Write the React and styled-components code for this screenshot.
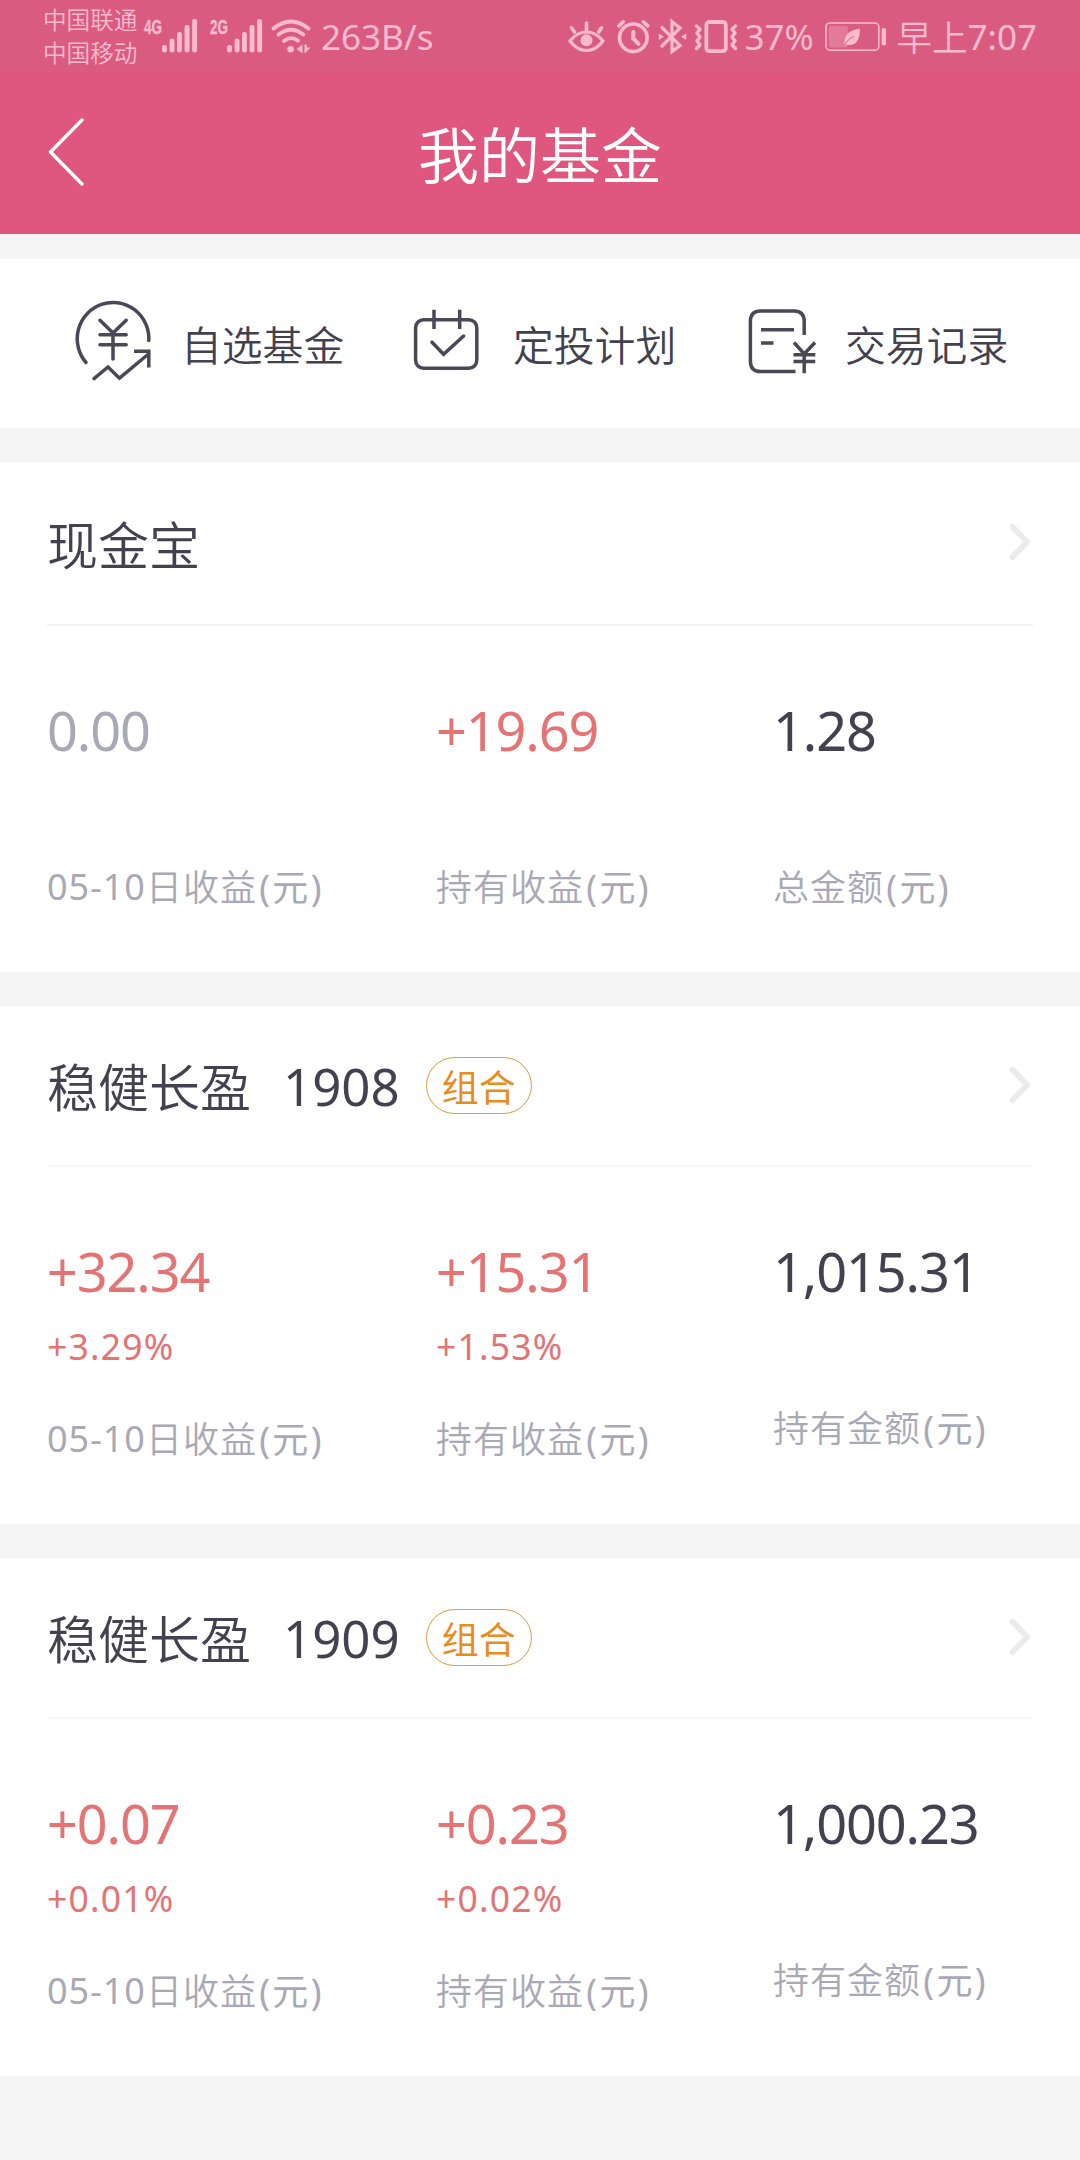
import React from 'react';
import styled, { createGlobalStyle } from 'styled-components';

const GlobalStyle = createGlobalStyle`
  * { box-sizing: border-box; }
  body {
    margin: 0;
    background: #f5f5f5;
    color: #43414f;
    font-family: "Noto Sans", "Noto Sans CJK SC", sans-serif;
  }
  svg { display: block; flex: none; }
`;

const Page = styled.div`
  width: 1080px;
  min-height: 2160px;
  background: #f5f5f5;
`;

/* ---------- status bar ---------- */

const StatusBar = styled.div`
  display: flex;
  justify-content: space-between;
  height: 72px;
  padding: 0 43px;
  background: #d95c80;
  color: #fbbace;
`;

const StatusGroup = styled.div`
  display: flex;
  align-items: flex-start;
`;

const Carriers = styled.div`
  display: flex;
  flex-direction: column;
  width: 101px;
  padding-top: 4px;
  font-size: 23.6px;
  font-weight: 350;
  line-height: 33px;
  white-space: nowrap;
`;

const NetworkTag = styled.div`
  width: 18px;
  margin-top: 16px;
  margin-left: ${(p) => p.$gap || 0}px;
  font: 700 21px/21px "Liberation Sans", sans-serif;
  -webkit-text-stroke: 0.4px #fbbace;
  transform: scaleX(0.64);
  transform-origin: left;
  white-space: nowrap;
`;

const StatusText = styled.div`
  padding-top: 12px;
  font-size: 35px;
  line-height: 50px;
  white-space: nowrap;
  margin-left: ${(p) => p.$gap || 0}px;
`;

const DayPart = styled.span`
  font-weight: 350;
  font-size: 35.5px;
  vertical-align: -1px;
`;

const StatusIcon = styled.svg`
  margin-top: 18px;
  margin-left: ${(p) => p.$gap || 0}px;
`;

/* ---------- title bar ---------- */

const TitleBar = styled.header`
  display: grid;
  grid-template-columns: 120px 1fr 120px;
  align-items: center;
  height: 162px;
  padding: 0 47px;
  background: #df577e;
  color: #fff;
`;

const Title = styled.h1`
  margin: 0;
  padding-top: 5px;
  font-size: 61px;
  line-height: 80px;
  font-weight: 350;
  text-align: center;
`;

/* ---------- shortcuts ---------- */

const Shortcuts = styled.nav`
  display: grid;
  grid-template-columns: repeat(3, 332px);
  height: 169px;
  margin-top: 25px;
  padding-left: 74px;
  background: #fff;
`;

const Shortcut = styled.div`
  display: flex;
  align-items: center;
  white-space: nowrap;
`;

const ShortcutLabel = styled.span`
  padding-top: 3px;
  font-size: 40.8px;
  line-height: 56px;
  font-weight: 350;
`;

const ShortcutIcon = styled.svg`
  width: 107px;
  margin-bottom: 1px;
  fill: none;
  stroke: #4a4856;
  stroke-width: 3.5;
  stroke-linecap: round;
`;

/* ---------- holding cards ---------- */

const Card = styled.section`
  margin-top: 34px;
  padding: 0 47px;
  background: #fff;
`;

const CardHead = styled.div`
  display: flex;
  align-items: center;
  height: ${(p) => (p.$tagged ? 161 : 164)}px;
  border-bottom: 2px solid ${(p) => (p.$tagged ? '#f6f6f6' : '#f2f2f2')};
`;

const FundName = styled.h2`
  margin: 0;
  padding-top: 3px;
  font-size: 51px;
  line-height: 70px;
  font-weight: 350;
  white-space: nowrap;
`;

const FundNumber = styled.span`
  margin-left: 32px;
  font-size: 51px;
  line-height: 70px;
`;

const Tag = styled.span`
  display: flex;
  align-items: center;
  justify-content: center;
  width: 106px;
  height: 57px;
  margin-left: 26px;
  padding-top: 4px;
  border: 1px solid #d99c40;
  border-radius: 29px;
  color: #e88c1e;
  font-size: 37px;
  line-height: 50px;
`;

const Chevron = styled.svg`
  margin: 0 2px 2px auto;
`;

const Stats = styled.div`
  display: grid;
  grid-template-columns: 389px 337px 1fr;
  padding: 69px 0 60px;
`;

const Stat = styled.div`
  display: flex;
  flex-direction: column;
  white-space: nowrap;
`;

const tones = { muted: '#a9a8b5', gain: '#e57373', plain: '#43414f' };

const Value = styled.div`
  font-size: 54px;
  line-height: 70px;
  letter-spacing: -1.1px;
  color: ${(p) => tones[p.$tone]};
`;

const Percent = styled.div`
  margin-top: 15px;
  font-size: 35.5px;
  line-height: 50px;
  letter-spacing: 1.2px;
  color: ${tones.gain};
`;

const Label = styled.div`
  height: 50px;
  margin-top: ${(p) => (p.$below ? 43 : 97)}px;
  font-size: 36px;
  line-height: 50px;
  letter-spacing: 1px;
  color: ${tones.muted};
`;

const LabelName = styled.span`
  font-weight: 350;
  vertical-align: -1px;
`;

const Unit = styled.span`
  margin-left: 2.2px;
  letter-spacing: 2.4px;
  vertical-align: -1px;
`;

const holdings = [
  {
    name: '现金宝',
    stats: [
      { value: '0.00', tone: 'muted', date: '05-10', label: '日收益' },
      { value: '+19.69', tone: 'gain', label: '持有收益' },
      { value: '1.28', tone: 'plain', label: '总金额' },
    ],
  },
  {
    name: '稳健长盈',
    number: '1908',
    tag: '组合',
    stats: [
      { value: '+32.34', percent: '+3.29%', tone: 'gain', date: '05-10', label: '日收益' },
      { value: '+15.31', percent: '+1.53%', tone: 'gain', label: '持有收益' },
      { value: '1,015.31', tone: 'plain', label: '持有金额' },
    ],
  },
  {
    name: '稳健长盈',
    number: '1909',
    tag: '组合',
    stats: [
      { value: '+0.07', percent: '+0.01%', tone: 'gain', date: '05-10', label: '日收益' },
      { value: '+0.23', percent: '+0.02%', tone: 'gain', label: '持有收益' },
      { value: '1,000.23', tone: 'plain', label: '持有金额' },
    ],
  },
];

const SignalBars = ({ gap }) => (
  <StatusIcon $gap={gap} width="36" height="36" fill="#fbbace">
    <rect x="0" y="27" width="4.9" height="7.4" rx="2.2" />
    <rect x="7.6" y="20.5" width="4.9" height="13.9" rx="2.2" />
    <rect x="15" y="14" width="4.9" height="20.4" rx="2.2" />
    <rect x="22.6" y="7" width="4.9" height="27.4" rx="2.2" />
    <rect x="30.2" y="1" width="4.9" height="33.4" rx="2.2" />
  </StatusIcon>
);

const WifiIcon = () => (
  <StatusIcon $gap={8} width="41" height="36" fill="none" stroke="#fbbace" strokeWidth="3.8" strokeLinecap="round">
    <path d="M2.5 10.5 Q20 -3.5 37.5 10.5" />
    <path d="M7.5 16.5 Q20 7 32.3 16.5" />
    <path d="M13 23 Q20 17.5 27 22.6" />
    <circle cx="19.6" cy="31.2" r="3.3" fill="#fbbace" stroke="none" />
    <path d="M31.5 26.5 V35.5 L25.5 31 Z M33.5 26.5 V35.5 L39.5 29.5 H35.8 V26.5 Z" fill="#fbbace" stroke="none" />
  </StatusIcon>
);

const EyeIcon = () => (
  <StatusIcon width="37" height="36" fill="none" stroke="#fbbace" strokeWidth="3.6" strokeLinecap="round">
    <path d="M2 23 Q9 14 18.5 14 Q28 14 35 23 Q28 32.5 18.5 32.5 Q9 32.5 2 23 Z" strokeWidth="3.2" strokeLinejoin="round" />
    <circle cx="18.5" cy="22.3" r="6" fill="#fbbace" stroke="none" />
    <path d="M18.5 5 V12 M3.5 9.8 L6.5 14 M33.5 9.8 L30.7 14" />
  </StatusIcon>
);

const AlarmIcon = () => (
  <StatusIcon $gap={11} width="35" height="37" fill="none" stroke="#fbbace" strokeWidth="3.6" strokeLinecap="round">
    <circle cx="17.3" cy="19.8" r="13.8" strokeWidth="3.6" />
    <path d="M17.3 14 V20.5 L22.5 25.8" strokeWidth="4" />
    <path d="M2.8 7.8 L7.2 3.8 M31.8 7.8 L27.4 3.8" />
  </StatusIcon>
);

const BluetoothIcon = () => (
  <StatusIcon $gap={7} width="29" height="37" fill="none" stroke="#fbbace" strokeWidth="3.2" strokeLinejoin="miter">
    <path d="M3 8.5 L22 27.5 L14 33.5 V3.5 L22 10 L3 29" />
    <path d="M0.8 15.5 L5.8 18.8 L0.8 22 Z M28.2 15.5 L23.2 18.8 L28.2 22 Z" fill="#fbbace" stroke="none" />
  </StatusIcon>
);

const VibrateIcon = () => (
  <StatusIcon $gap={7} width="44" height="37" fill="none" stroke="#fbbace" strokeWidth="3.4" strokeLinecap="round" strokeLinejoin="round">
    <rect x="12.4" y="4" width="19.4" height="29.2" rx="3" strokeWidth="3.8" />
    <path d="M2.5 8 L6 11.2 L3 15 L6 19 L3 23 L6 27 L2.5 30.5" />
    <path d="M41.5 8 L38 11.2 L41 15 L38 19 L41 23 L38 27 L41.5 30.5" />
  </StatusIcon>
);

const BatteryIcon = () => (
  <StatusIcon $gap={11} width="62" height="36" fill="none">
    <rect x="1" y="5" width="52.8" height="27.2" rx="4" stroke="#fbbace" strokeWidth="1.6" />
    <rect x="3.8" y="7.8" width="19" height="21.6" rx="2" fill="#fbbace" opacity="0.32" />
    <path d="M34.8 10.5 C35.3 18 33 26.8 25 27 C23 27.2 21.5 25.5 19.5 28.5 C19 19 21 13 34.8 10.5 Z" fill="#fbbace" />
    <path d="M19.6 27.5 C21.5 23 24.5 20.5 28.5 18.5" stroke="#d95c80" strokeWidth="1" />
    <rect x="56.6" y="10" width="4.4" height="17.4" rx="2" fill="#fbbace" />
  </StatusIcon>
);

const FundIcon = () => (
  <ShortcutIcon viewBox="74 299 107 88" height="88">
    <path d="M86 362.5 A35.8 36.3 0 1 1 148.8 340.5" />
    <path d="M100 320.3 L113 333 L126.2 320.3 M100 334.7 H126.2 M100 344.7 H126.2 M113 333 V359" />
    <path d="M94 378.6 L108 367 L119.5 378.2 L148.5 354" />
    <path d="M134 351.3 H148.8 V367.5" strokeLinecap="butt" />
  </ShortcutIcon>
);

const PlanIcon = () => (
  <ShortcutIcon viewBox="406 299 107 88" height="88">
    <rect x="415.6" y="319.7" width="61.2" height="48.6" rx="8" />
    <path d="M434 309.7 V329 M459.7 309.7 V329" strokeLinecap="butt" />
    <path d="M432 342.2 L443.6 354.3 L463.6 336" />
  </ShortcutIcon>
);

const RecordIcon = () => (
  <ShortcutIcon viewBox="738 299 107 88" height="88">
    <path d="M795.5 371.6 H760.5 Q750.4 371.6 750.4 361 V321.5 Q750.4 311 760.5 311 H794 Q804.2 311 804.2 321.5 V335" strokeLinecap="butt" />
    <path d="M761 329.7 H794 M761 343 H773.5" strokeLinecap="butt" />
    <path d="M794 342.5 L804.2 354 L815 342.5 M793.5 354.7 H815.3 M793.5 361.4 H815.3 M804.2 354 V373.3" strokeLinecap="butt" />
  </ShortcutIcon>
);

export default function App() {
  return (
    <Page lang="zh-CN">
      <GlobalStyle />
      <StatusBar>
        <StatusGroup>
          <Carriers>
            <span>中国联通</span>
            <span>中国移动</span>
          </Carriers>
          <NetworkTag>4G</NetworkTag>
          <SignalBars gap={0} />
          <NetworkTag $gap={12}>2G</NetworkTag>
          <SignalBars gap={-1} />
          <WifiIcon />
          <StatusText $gap={9}>263B/s</StatusText>
        </StatusGroup>
        <StatusGroup>
          <EyeIcon />
          <AlarmIcon />
          <BluetoothIcon />
          <VibrateIcon />
          <StatusText $gap={6}>37%</StatusText>
          <BatteryIcon />
          <StatusText $gap={10}><DayPart>早上</DayPart>7:07</StatusText>
        </StatusGroup>
      </StatusBar>
      <TitleBar>
        <svg width="38" height="70" fill="none" stroke="#fff" strokeWidth="3.4" strokeLinecap="round" strokeLinejoin="round">
          <path d="M35 2 L3.5 34 L35 66" />
        </svg>
        <Title>我的基金</Title>
      </TitleBar>
      <Shortcuts>
        <Shortcut><FundIcon /><ShortcutLabel>自选基金</ShortcutLabel></Shortcut>
        <Shortcut><PlanIcon /><ShortcutLabel>定投计划</ShortcutLabel></Shortcut>
        <Shortcut><RecordIcon /><ShortcutLabel>交易记录</ShortcutLabel></Shortcut>
      </Shortcuts>
      {holdings.map((fund, i) => (
        <Card key={i}>
          <CardHead $tagged={Boolean(fund.tag)}>
            <FundName>{fund.name}</FundName>
            {fund.number && <FundNumber>{fund.number}</FundNumber>}
            {fund.tag && <Tag>{fund.tag}</Tag>}
            <Chevron width="22" height="38" fill="none" stroke="#ebebeb" strokeWidth="6" strokeLinecap="round" strokeLinejoin="round">
              <path d="M3.5 4 L18.3 19 L3.5 34" />
            </Chevron>
          </CardHead>
          <Stats>
            {fund.stats.map((s) => (
              <Stat key={s.label}>
                <Value $tone={s.tone}>{s.value}</Value>
                {s.percent && <Percent>{s.percent}</Percent>}
                <Label $below={Boolean(s.percent)}>
                  {s.date}
                  <LabelName>{s.label}</LabelName>
                  <Unit>(元)</Unit>
                </Label>
              </Stat>
            ))}
          </Stats>
        </Card>
      ))}
    </Page>
  );
}
